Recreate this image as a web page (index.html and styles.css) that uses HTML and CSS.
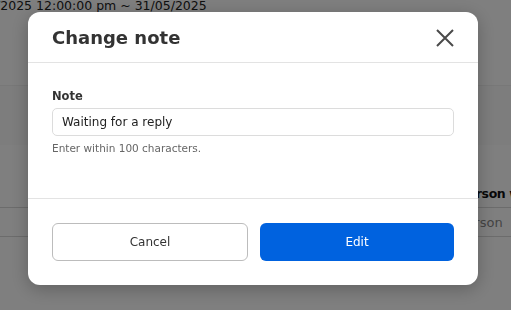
FILE: index.html
```html
<!DOCTYPE html>
<html lang="en">
<head>
    <meta charset="UTF-8">
    <meta name="viewport" content="width=device-width, initial-scale=1.0">
    <title>Change note</title>
    <link rel="stylesheet" href="styles.css">
</head>
<body>
    <div class="page">
        <div class="range">01/05/2025 12:00:00 pm ~ 31/05/2025</div>
        <div class="toolbar"></div>
        <div class="table">
            <div class="row head">
                <div class="cell"></div>
                <div class="cell last">Person who handles</div>
            </div>
            <div class="row">
                <div class="cell"></div>
                <div class="cell last muted">Person</div>
            </div>
        </div>
    </div>

    <div class="overlay">
        <div class="modal">
            <div class="modal-header">
                <h2>Change note</h2>
                <button class="close" type="button" aria-label="Close">
                    <svg width="20" height="20" viewBox="0 0 20 20">
                        <path d="M2 2 L18 18 M18 2 L2 18" stroke="#4a4a4a" stroke-width="2" fill="none"/>
                    </svg>
                </button>
            </div>
            <div class="modal-body">
                <label for="note">Note</label>
                <input type="text" id="note" value="Waiting for a reply">
                <div class="hint">Enter within 100 characters.</div>
            </div>
            <div class="modal-footer">
                <button class="btn btn-cancel" type="button">Cancel</button>
                <button class="btn btn-edit" type="button">Edit</button>
            </div>
        </div>
    </div>
</body>
</html>
```

FILE: styles.css
```css
* {
    box-sizing: border-box;
    margin: 0;
    padding: 0;
}

body {
    font-family: 'DejaVu Sans', sans-serif;
    background: #fff;
    color: #222;
    overflow: hidden;
    height: 310px;
}

/* page under the overlay */
.range {
    font-size: 12.5px;
    line-height: 12px;
    margin-left: -40px;
    white-space: nowrap;
}

.toolbar {
    margin-top: 73px;
    height: 60px;
    border-top: 1px solid #f0f0f0;
    background: #fafafa;
}

.table {
    margin-top: 25px;
}

.row {
    display: flex;
    border-bottom: 1px solid #d8d8d8;
    height: 29px;
    align-items: center;
    white-space: nowrap;
}

.row.head {
    height: 38px;
    align-items: flex-end;
    padding-bottom: 6px;
    font-weight: bold;
    color: #111;
}

.cell {
    flex: 1;
    font-size: 13px;
}

.row.head .cell {
    font-size: 12.5px;
    letter-spacing: -0.4px;
}

.cell.last {
    flex: 0 0 52px;
    overflow: hidden;
}

.muted {
    color: #888;
}

/* modal */
.overlay {
    position: fixed;
    inset: 0;
    background: rgba(0, 0, 0, 0.5);
    padding: 12px 0 0 28px;
}

.modal {
    width: 450px;
    background: #fff;
    border-radius: 12px;
    box-shadow: 0 4px 18px rgba(0, 0, 0, 0.25);
}

.modal-header {
    display: flex;
    align-items: center;
    justify-content: space-between;
    height: 51px;
    padding: 0 23px 0 24px;
    border-bottom: 1px solid #e3e3e3;
}

.modal-header h2 {
    font-size: 18px;
    font-weight: bold;
    color: #333;
    padding-top: 1px;
}

.close {
    background: none;
    border: none;
    width: 20px;
    height: 20px;
    cursor: pointer;
    display: flex;
    margin-top: 1px;
}

.modal-body {
    padding: 26px 24px 43px;
}

.modal-body label {
    display: block;
    font-size: 11.5px;
    font-weight: bold;
    color: #333;
    line-height: 14px;
    margin-bottom: 5px;
}

.modal-body input {
    display: block;
    width: 100%;
    height: 28px;
    padding: 0 9px;
    border: 1px solid #dcdcdc;
    border-radius: 5px;
    font-family: 'DejaVu Sans', sans-serif;
    font-size: 12px;
    color: #222;
    outline: none;
}

.hint {
    margin-top: 5px;
    font-size: 10.5px;
    line-height: 14px;
    color: #666;
}

.modal-footer {
    display: flex;
    gap: 12px;
    padding: 24px;
    border-top: 1px solid #e3e3e3;
}

.btn {
    flex: 1;
    height: 38px;
    border-radius: 6px;
    font-family: 'DejaVu Sans', sans-serif;
    font-size: 12px;
    cursor: pointer;
}

.btn-cancel {
    background: #fff;
    border: 1px solid #bcbcbc;
    color: #333;
}

.btn-edit {
    background: #0062df;
    border: none;
    color: #fff;
}
```
